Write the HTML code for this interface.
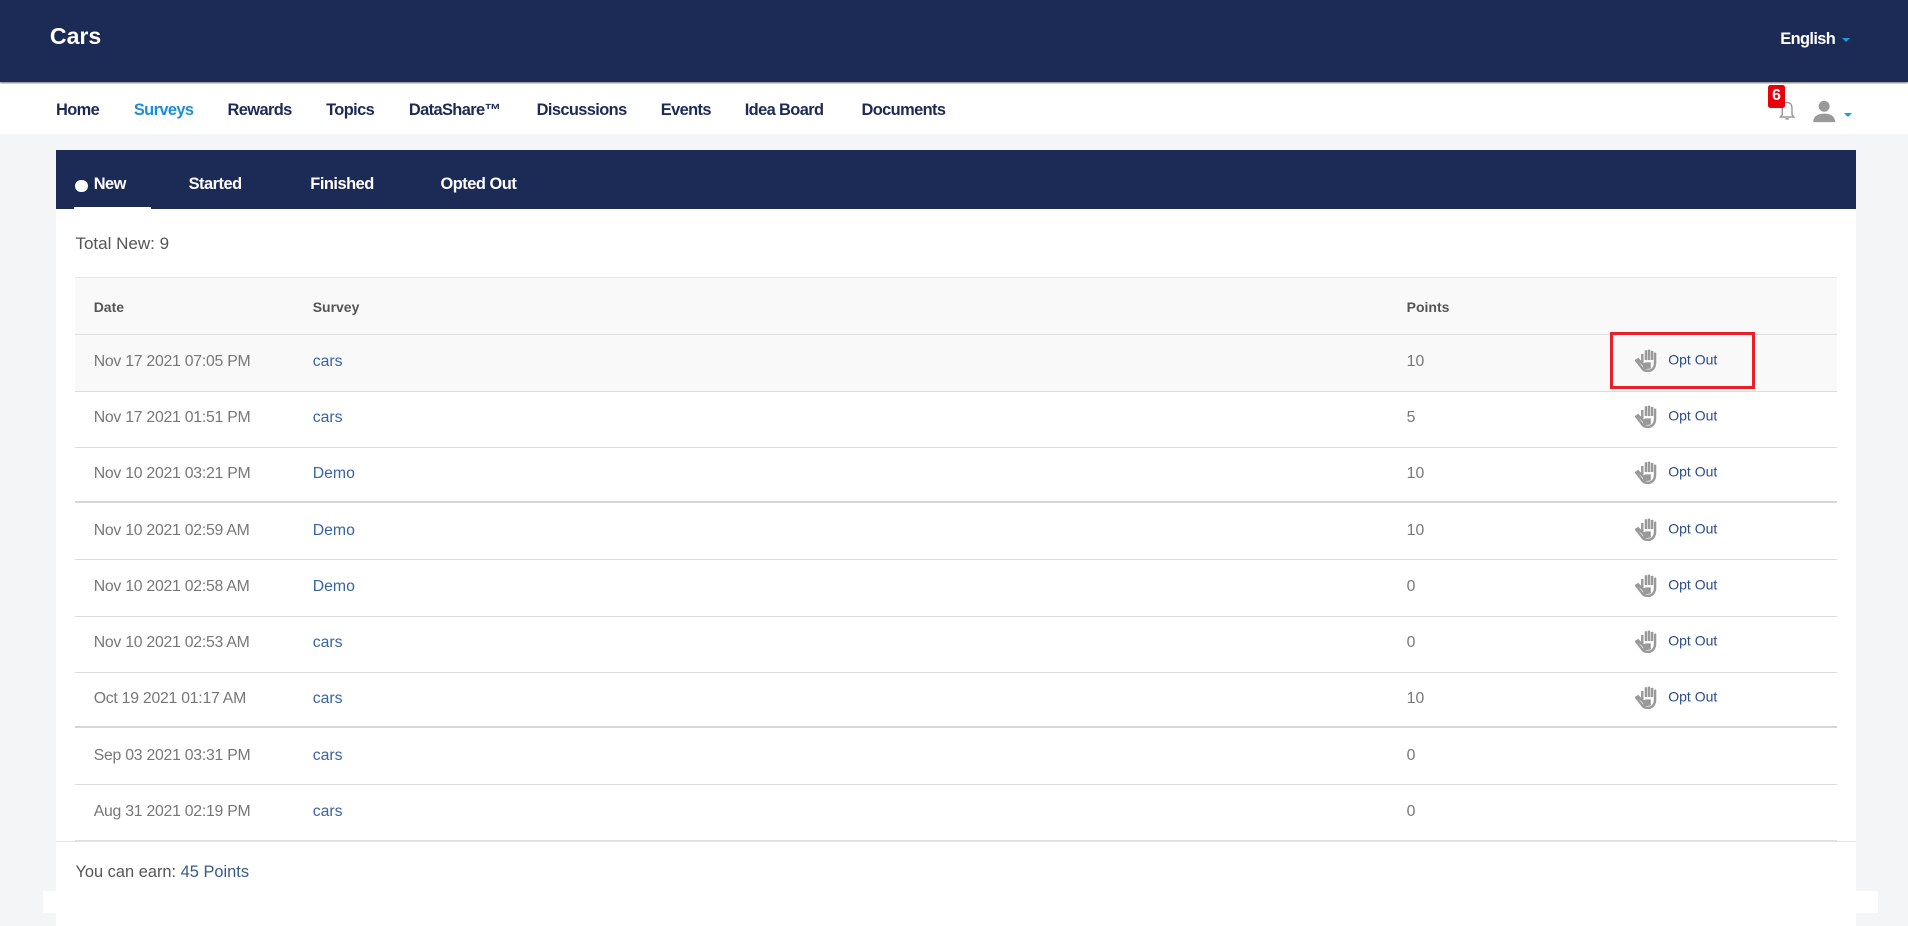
<!DOCTYPE html>
<html><head><meta charset="utf-8"><style>
html,body{margin:0;padding:0;background:#f4f5f7;overflow:hidden}
body{width:1908px;height:926px}
#w{zoom:1.21684;width:1568px;height:761px;position:relative;font-family:"Liberation Sans",sans-serif;overflow:hidden}
.a{position:absolute;white-space:nowrap}
.hdr{left:0;top:0;width:1568px;height:67px;background:#1c2a56;box-shadow:0 1px 2px #555}
.nav{left:0;top:69px;width:1568px;height:41px;background:#fff}
.nav span{position:absolute;top:14px;font-size:13.5px;font-weight:bold;color:#1c2a56;letter-spacing:-0.5px}
.card{left:46px;top:123px;width:1479px;height:650px;background:#fff}
.tabs{left:46px;top:123px;width:1479px;height:49px;background:#1c2a56}
.tabs span{position:absolute;top:21px;font-size:13.5px;font-weight:bold;color:#fff;letter-spacing:-0.4px}
.row{position:absolute;left:62px;width:1448px;height:46px;border-bottom:1px solid #ddd;font-size:13px;color:#777}
.row span{position:absolute;top:15px}
.row .s{left:195px;color:#3a64a4}
.row .d{left:15px;letter-spacing:-0.2px}
.row .p{left:1094px}
.row .o{left:1282px;top:12px;color:#2a4a8a;font-size:11.5px}
.row .o svg{vertical-align:middle;margin-right:8px}
</style></head><body><div id="w">
<div class="a hdr"></div>
<div class="a" style="left:41px;top:19px;font-size:19px;font-weight:bold;color:#fff">Cars</div>
<div class="a" style="left:1463px;top:25px;font-size:13.5px;font-weight:bold;color:#fff;letter-spacing:-0.5px">English</div>
<div class="a" style="left:1514px;top:31px;width:0;height:0;border-left:4px solid transparent;border-right:4px solid transparent;border-top:4px solid #1a9be0"></div>
<div class="a nav">
<span style="left:46px">Home</span><span style="left:110px;color:#1a8fd8">Surveys</span><span style="left:187px">Rewards</span><span style="left:268px">Topics</span><span style="left:336px">DataShare™</span><span style="left:441px">Discussions</span><span style="left:543px">Events</span><span style="left:612px">Idea Board</span><span style="left:708px">Documents</span>
<svg style="position:absolute;left:1461px;top:13px" width="15" height="18" viewBox="0 0 15 18"><path d="M7.5 2C4.5 2 3.5 4.5 3.5 7v5L2 14h11l-1.5-2V7c0-2.5-1-5-4-5zM6 15.5h3" fill="none" stroke="#999" stroke-width="1.2"/></svg>
<div style="position:absolute;left:1453px;top:1px;width:14px;height:19px;background:#e8000b;border-radius:2px;color:#fff;font-weight:bold;font-size:13px;text-align:center;line-height:18px">6</div>
<svg style="position:absolute;left:1489px;top:12px" width="20" height="20" viewBox="0 0 20 20"><circle cx="10" cy="6" r="4.5" fill="#999"/><path d="M1 19c0-5 4-7 9-7s9 2 9 7z" fill="#999"/></svg>
<div style="position:absolute;left:1515px;top:24px;border-left:4px solid transparent;border-right:4px solid transparent;border-top:4px solid #1a9be0"></div>
</div>
<div class="a card"></div>
<div class="a tabs">
<div style="position:absolute;left:16px;top:25px;width:10px;height:10px;border-radius:50%;background:#fff"></div>
<span style="left:31px">New</span><span style="left:109px">Started</span><span style="left:209px">Finished</span><span style="left:316px">Opted Out</span>
<div style="position:absolute;left:15px;top:47px;width:63px;height:2px;background:#fff"></div>
</div>
<div class="a" style="left:62px;top:192px;font-size:14px;color:#555">Total New: 9</div>
<div class="a" style="left:62px;top:228px;width:1448px;height:46px;background:#f9f9f9;border-top:1px solid #e5e5e5;border-bottom:1px solid #ddd;font-size:11.5px;font-weight:bold;color:#555">
<span style="position:absolute;left:15px;top:17px">Date</span><span style="position:absolute;left:195px;top:17px">Survey</span><span style="position:absolute;left:1094px;top:17px">Points</span></div>

<div class="row" style="top:275px;background:#f9f9f9"><span class="d">Nov 17 2021 07:05 PM</span><span class="s">cars</span><span class="p">10</span><span class="o"><svg width="19" height="19" viewBox="0 0 19 19"><path d="M9 1v8M11.5 0.5v8.5M14 1.5v7.5M16.5 3v8c0 4-2 7-6 7-3 0-4-1-6-4L1 9.5l1.5-1L6 12V4" fill="none" stroke="#999" stroke-width="2"/><path d="M6 12l3-1 4 0 0 5-6 1z" fill="#999"/></svg>Opt Out</span></div>
<div class="row" style="top:321px"><span class="d">Nov 17 2021 01:51 PM</span><span class="s">cars</span><span class="p">5</span><span class="o"><svg width="19" height="19" viewBox="0 0 19 19"><path d="M9 1v8M11.5 0.5v8.5M14 1.5v7.5M16.5 3v8c0 4-2 7-6 7-3 0-4-1-6-4L1 9.5l1.5-1L6 12V4" fill="none" stroke="#999" stroke-width="2"/><path d="M6 12l3-1 4 0 0 5-6 1z" fill="#999"/></svg>Opt Out</span></div>
<div class="row" style="top:367px;border-bottom:2px solid #d6d6d6;height:45px"><span class="d">Nov 10 2021 03:21 PM</span><span class="s">Demo</span><span class="p">10</span><span class="o"><svg width="19" height="19" viewBox="0 0 19 19"><path d="M9 1v8M11.5 0.5v8.5M14 1.5v7.5M16.5 3v8c0 4-2 7-6 7-3 0-4-1-6-4L1 9.5l1.5-1L6 12V4" fill="none" stroke="#999" stroke-width="2"/><path d="M6 12l3-1 4 0 0 5-6 1z" fill="#999"/></svg>Opt Out</span></div>
<div class="row" style="top:414px;height:45px"><span class="d">Nov 10 2021 02:59 AM</span><span class="s">Demo</span><span class="p">10</span><span class="o"><svg width="19" height="19" viewBox="0 0 19 19"><path d="M9 1v8M11.5 0.5v8.5M14 1.5v7.5M16.5 3v8c0 4-2 7-6 7-3 0-4-1-6-4L1 9.5l1.5-1L6 12V4" fill="none" stroke="#999" stroke-width="2"/><path d="M6 12l3-1 4 0 0 5-6 1z" fill="#999"/></svg>Opt Out</span></div>
<div class="row" style="top:460px"><span class="d">Nov 10 2021 02:58 AM</span><span class="s">Demo</span><span class="p">0</span><span class="o"><svg width="19" height="19" viewBox="0 0 19 19"><path d="M9 1v8M11.5 0.5v8.5M14 1.5v7.5M16.5 3v8c0 4-2 7-6 7-3 0-4-1-6-4L1 9.5l1.5-1L6 12V4" fill="none" stroke="#999" stroke-width="2"/><path d="M6 12l3-1 4 0 0 5-6 1z" fill="#999"/></svg>Opt Out</span></div>
<div class="row" style="top:506px"><span class="d">Nov 10 2021 02:53 AM</span><span class="s">cars</span><span class="p">0</span><span class="o"><svg width="19" height="19" viewBox="0 0 19 19"><path d="M9 1v8M11.5 0.5v8.5M14 1.5v7.5M16.5 3v8c0 4-2 7-6 7-3 0-4-1-6-4L1 9.5l1.5-1L6 12V4" fill="none" stroke="#999" stroke-width="2"/><path d="M6 12l3-1 4 0 0 5-6 1z" fill="#999"/></svg>Opt Out</span></div>
<div class="row" style="top:552px;border-bottom:2px solid #d6d6d6;height:45px"><span class="d">Oct 19 2021 01:17 AM</span><span class="s">cars</span><span class="p">10</span><span class="o"><svg width="19" height="19" viewBox="0 0 19 19"><path d="M9 1v8M11.5 0.5v8.5M14 1.5v7.5M16.5 3v8c0 4-2 7-6 7-3 0-4-1-6-4L1 9.5l1.5-1L6 12V4" fill="none" stroke="#999" stroke-width="2"/><path d="M6 12l3-1 4 0 0 5-6 1z" fill="#999"/></svg>Opt Out</span></div>
<div class="row" style="top:599px;height:45px"><span class="d">Sep 03 2021 03:31 PM</span><span class="s">cars</span><span class="p">0</span></div>
<div class="row" style="top:645px;height:45px"><span class="d">Aug 31 2021 02:19 PM</span><span class="s">cars</span><span class="p">0</span></div>
<div class="a" style="left:46px;top:691px;width:1479px;height:1px;background:#e5e5e5"></div>

<div class="a" style="left:1323px;top:273px;width:114px;height:42px;border:3px solid #e8202a"></div>
<div class="a" style="left:62px;top:709px;font-size:13.5px;color:#555">You can earn: <span style="color:#3a5a8a">45 Points</span></div>
<div class="a" style="left:0;top:732px;width:46px;height:29px;background:#f4f5f7"></div>
<div class="a" style="left:1525px;top:732px;width:43px;height:29px;background:#f4f5f7"></div>
<div class="a" style="left:35px;top:732px;width:1508px;height:18px;background:#fff"></div>
</div></body></html>
